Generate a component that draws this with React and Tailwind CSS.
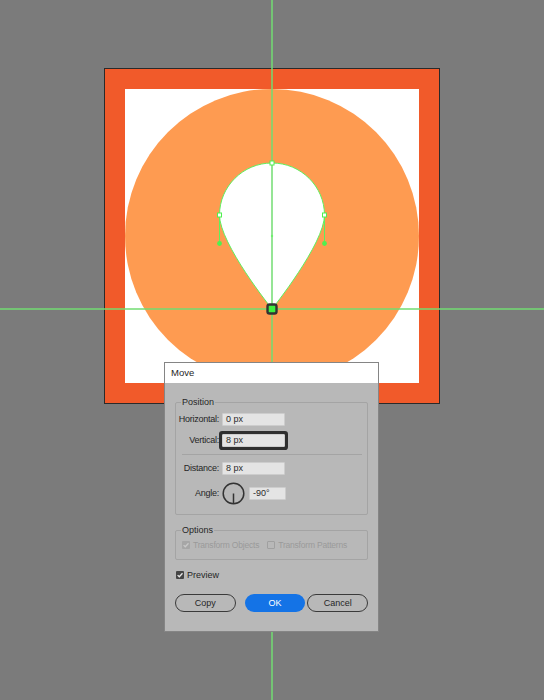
import React from "react";

const FONT = { fontFamily: '"Liberation Sans", Arial, sans-serif' };

function Check({ color }) {
  return (
    <svg width="8" height="8" viewBox="0 0 8 8" className="block">
      <path d="M1.6 4.1 L3.3 5.8 L6.5 2.2" fill="none" stroke={color} strokeWidth="1.3" />
    </svg>
  );
}

function Field({ value, focused, w = "w-[63px]" }) {
  return (
    <div
      className={`${w} h-[13px] bg-[#e4e4e4] border border-[#cdcdcd] rounded-[1px] flex items-center pl-[3px] text-[9px] leading-none text-[#2b2b2b] whitespace-nowrap ${
        focused ? "ring-[3px] ring-[#2f2f2f]" : ""
      }`}
    >
      {value}
    </div>
  );
}

function Row({ label, children, className = "" }) {
  return (
    <div className={`flex items-center ${className}`}>
      <div className="w-[43px] flex justify-end">
        <span className="whitespace-nowrap text-[9px] tracking-[-0.25px] leading-none text-[#262626]">{label}</span>
      </div>
      <div className="ml-[3px] flex items-center">{children}</div>
    </div>
  );
}

export default function App() {
  return (
    <div className="relative w-[544px] h-[700px] bg-[#7b7b7b] overflow-hidden" style={FONT}>
      {/* Artboard */}
      <div className="absolute left-[104px] top-[68px] w-[336px] h-[336px] border border-[#2a2a2a] bg-[#f15a2a] p-[20px]">
        <div className="w-[294px] h-[294px] bg-white">
          <svg width="294" height="294" viewBox="0 0 294 294" className="block">
            <circle cx="147" cy="147" r="147" fill="#fe9b51" />
            <path
              d="M147,74 C118,74 94.5,97.5 94.5,126 C94.5,154.7 147,220 147,220 C147,220 199.5,154.7 199.5,126 C199.5,97.5 176,74 147,74 Z"
              fill="#ffffff"
            />
          </svg>
        </div>
      </div>

      {/* Guides */}
      <div className="absolute left-[271px] top-0 w-[2px] h-[700px] bg-[#72dc72] opacity-75" />
      <div className="absolute left-0 top-[308px] w-[544px] h-[2px] bg-[#72dc72] opacity-75" />

      {/* Selection overlay */}
      <svg width="294" height="294" viewBox="0 0 294 294" className="absolute left-[125px] top-[89px]">
        <path
          d="M147,74 C118,74 94.5,97.5 94.5,126 C94.5,154.7 147,220 147,220 C147,220 199.5,154.7 199.5,126 C199.5,97.5 176,74 147,74 Z"
          fill="none"
          stroke="#5ef05e"
          strokeWidth="1"
        />
        <line x1="94.5" y1="126" x2="94.5" y2="154.5" stroke="#5ef05e" strokeWidth="1" />
        <line x1="199.5" y1="126" x2="199.5" y2="154.5" stroke="#5ef05e" strokeWidth="1" />
        <circle cx="94.5" cy="154.5" r="2.4" fill="#4ff04f" />
        <circle cx="199.5" cy="154.5" r="2.4" fill="#4ff04f" />
        <rect x="145" y="72" width="4" height="4" fill="#fff" stroke="#4ff04f" strokeWidth="1" />
        <rect x="92.5" y="124" width="4" height="4" fill="#fff" stroke="#4ff04f" strokeWidth="1" />
        <rect x="197.5" y="124" width="4" height="4" fill="#fff" stroke="#4ff04f" strokeWidth="1" />
        <circle cx="147" cy="147" r="1.2" fill="#6ef06e" />
        <rect x="142.5" y="215.5" width="9" height="9" rx="2" fill="#3ef03e" stroke="#333" strokeWidth="2.4" />
      </svg>

      {/* Move dialog */}
      <div className="absolute left-[164px] top-[362px] w-[215px] h-[270px] border border-[#858585] bg-[#b8b8b8] flex flex-col">
        <div className="h-[20px] bg-white flex items-center pl-[6px] text-[9.5px] leading-none text-[#262626]">Move</div>
        <div className="px-[10px] pt-[13px] flex flex-col">
          <fieldset className="border border-[#a4a4a4] rounded-[2px] pb-[10px] flex flex-col">
            <legend className="ml-[5px] px-[1px] text-[9px] leading-[12px] text-[#262626]">Position</legend>
            <Row label="Horizontal:" className="mt-[5px] h-[13px]">
              <Field value="0 px" />
            </Row>
            <Row label="Vertical:" className="mt-[8px] h-[13px]">
              <Field value="8 px" focused />
            </Row>
            <div className="mt-[7px] ml-[6px] mr-[5px] h-px bg-[#a4a4a4]" />
            <Row label="Distance:" className="mt-[7px] h-[13px]">
              <Field value="8 px" />
            </Row>
            <Row label="Angle:" className="mt-[7px] h-[22px]">
              <svg width="23" height="23" viewBox="0 0 23 23" className="block">
                <circle cx="11.5" cy="11.5" r="10.3" fill="none" stroke="#333" strokeWidth="1.5" />
                <line x1="11.5" y1="11.5" x2="11.5" y2="21.5" stroke="#333" strokeWidth="1.5" />
              </svg>
              <div className="ml-[4px]">
                <Field value="-90°" w="w-[37px]" />
              </div>
            </Row>
          </fieldset>

          <fieldset className="mt-[9px] border border-[#a4a4a4] rounded-[2px] pb-[9px] flex flex-col">
            <legend className="ml-[5px] px-[1px] text-[9px] leading-[12px] text-[#262626]">Options</legend>
            <div className="mt-[4px] h-[10px] flex items-center text-[8.5px] tracking-[-0.2px] leading-none text-[#9a9a9a] whitespace-nowrap">
              <div className="ml-[6px] w-[8px] h-[8px] shrink-0 bg-[#a6a6a6] rounded-[1px]">
                <Check color="#c8c8c8" />
              </div>
              <span className="ml-[3px]">Transform Objects</span>
              <div className="ml-[8px] w-[8px] h-[8px] shrink-0 border border-[#a0a0a0] rounded-[1px]" />
              <span className="ml-[3px]">Transform Patterns</span>
            </div>
          </fieldset>

          <div className="mt-[11px] h-[8px] flex items-center text-[9px] leading-none text-[#262626]">
            <div className="ml-[1px] w-[8px] h-[8px] bg-[#454545] rounded-[1px]">
              <Check color="#e8e8e8" />
            </div>
            <span className="ml-[3px]">Preview</span>
          </div>

          <div className="mt-[15px] flex items-center text-[9px] leading-none">
            <button className="w-[61px] h-[18px] rounded-full border-[1.5px] border-[#3a3a3a] text-[#262626] flex items-center justify-center">
              Copy
            </button>
            <button className="ml-[9px] w-[61px] h-[18px] rounded-full bg-[#1473e6] text-white flex items-center justify-center">
              OK
            </button>
            <button className="ml-[2px] w-[61px] h-[18px] rounded-full border-[1.5px] border-[#3a3a3a] text-[#262626] flex items-center justify-center">
              Cancel
            </button>
          </div>
        </div>
      </div>
    </div>
  );
}
